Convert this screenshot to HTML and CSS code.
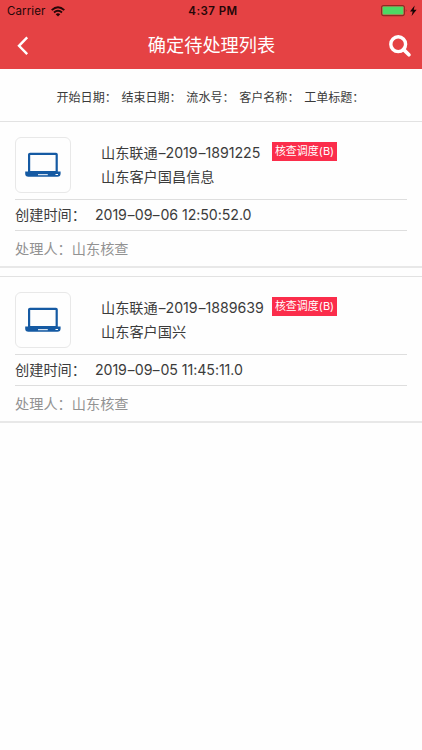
FILE: index.html
```html
<!DOCTYPE html>
<html lang="zh-CN">
<head>
<meta charset="utf-8">
<title>确定待处理列表</title>
<link rel="stylesheet" href="styles.css">
</head>
<body>
<header class="header">
  <div class="status">
    <div class="carrier"><span>Carrier</span>
      <svg width="14" height="11" viewBox="0 0 14 11" fill="none" stroke="#250708" stroke-width="1.9"><path d="M.7 4.1Q7-1.8 13.3 4.1M3 6.5q4-3.5 8 0"/><path d="M7 10.6 4.7 8.2q2.3-1.8 4.6 0z" fill="#250708" stroke="none"/></svg>
    </div>
    <div class="clock">4:37 PM</div>
    <svg class="battery" width="36" height="12" viewBox="0 0 36 12"><rect x=".6" y=".6" width="22.8" height="10" rx="2" fill="none" stroke="#8d2a24" stroke-width="1.1"/><rect x="1.6" y="1.6" width="20.8" height="8" rx=".7" fill="#4cd964"/><path d="M24.8 4q1.4 1.6 0 3.2z" fill="#8d2a24"/><path d="M33.7.5 29 6.4h2.7L30.6 11l5-6.2h-2.9z" fill="#150405"/></svg>
  </div>
  <div class="nav">
    <svg width="12" height="20" viewBox="0 0 12 20" fill="none" stroke="#fff" stroke-width="2.4"><path d="M10.2 1.4 2 9.8l8.2 8.4"/></svg>
    <h1>确定待处理列表</h1>
    <svg width="22" height="22" viewBox="0 0 22 22" fill="none" stroke="#fff"><circle cx="9.2" cy="9.2" r="7.4" stroke-width="3.4"/><path d="m14.4 14.4 5.5 5.4" stroke-width="3.6" stroke-linecap="round"/></svg>
  </div>
</header>
<nav class="filters"><span>开始日期：</span><span>结束日期：</span><span>流水号：</span><span>客户名称：</span><span>工单标题：</span></nav>
<main class="list">
  <article class="card">
    <div class="top">
      <div class="thumb"><svg width="36" height="26" viewBox="0 0 36 26"><path fill="#155aa3" fill-rule="evenodd" d="M5 .8h26q1.8 0 1.8 1.8V21H3V2.6Q3 .8 5 .8zM5.2 2.9V19h25.4V2.9z"/><path fill="#155aa3" d="M.2 19.4h35.4v2.2q0 3.2-3.2 3.2h-29Q.2 24.800.2 21.600z"/><path stroke="#fff" d="M13 22.700h9.800M30.500 22.500h2.500"/></svg></div>
      <div class="info"><div class="code">山东联通<i>-</i>2019<i>-</i>1891225</div><div>山东客户国昌信息</div></div>
      <span class="badge">核查调度(B)</span>
    </div>
    <div class="time"><span>创建时间：</span><span class="date">2019<i>-</i>09<i>-</i>06 12:50:52.0</span></div>
    <div class="person">处理人：山东核查</div>
  </article>
  <article class="card">
    <div class="top">
      <div class="thumb"><svg width="36" height="26" viewBox="0 0 36 26"><path fill="#155aa3" fill-rule="evenodd" d="M5 .8h26q1.8 0 1.8 1.8V21H3V2.6Q3 .8 5 .8zM5.2 2.9V19h25.4V2.9z"/><path fill="#155aa3" d="M.2 19.4h35.4v2.2q0 3.2-3.2 3.2h-29Q.2 24.800.2 21.600z"/><path stroke="#fff" d="M13 22.700h9.800M30.500 22.500h2.500"/></svg></div>
      <div class="info"><div class="code">山东联通<i>-</i>2019<i>-</i>1889639</div><div>山东客户国兴</div></div>
      <span class="badge">核查调度(B)</span>
    </div>
    <div class="time"><span>创建时间：</span><span class="date">2019<i>-</i>09<i>-</i>05 11:45:11.0</span></div>
    <div class="person">处理人：山东核查</div>
  </article>
</main>
</body>
</html>
```
FILE: styles.css
```css
* { box-sizing: border-box; }
body {
  margin: 0;
  background: #fefefe;
  color: #3b3b3b;
  font: 14.2px/24px Inter, "Noto Sans CJK SC", sans-serif;
  white-space: nowrap;
}
svg { display: block; flex: none; }
i { display: inline-block; width: 8px; text-align: center; font-style: normal; transform: scaleX(1.5); }

.header { height: 69px; background: #e54244; color: #fff; }
.status {
  display: grid;
  grid-template-columns: 1fr auto 1fr;
  height: 22px;
  padding: 0 5px 0 7px;
  align-items: center;
  color: #250708;
  font-size: 11.5px;
  line-height: 22px;
}
.carrier { display: flex; align-items: center; gap: 6px; letter-spacing: .1px; }
.clock { padding-left: 2px; font-weight: 600; letter-spacing: .45px; }
.battery { justify-self: end; }
.nav { display: flex; height: 47px; padding: 0 11px 0 17px; align-items: center; justify-content: space-between; }
.nav h1 { margin: -2px 0 0 5px; font-size: 18.2px; font-weight: 400; line-height: 24px; }

.filters { display: flex; height: 52px; padding: 5px 0 0 56.5px; gap: 4.7px; align-items: center; font-size: 12.05px; }

.list { display: grid; gap: 8px; }
.card { height: 147px; padding: 0 15px; border-top: 1px solid #e2e2e2; border-bottom: 2px solid #e8e8e8; }
.top { display: flex; height: 78px; padding-top: 15px; align-items: flex-start; border-bottom: 1px solid #dedede; }
.thumb { display: grid; width: 56px; height: 56px; place-items: center; border: 1px solid #e8e8e8; border-radius: 6px; }
.info { width: 171px; margin-top: 4px; padding-left: 30px; }
.code { letter-spacing: -.05px; }
.badge { width: 65px; height: 19px; margin: 5px 0 0 30px; background: #fb2d4b; color: #fff; font-size: 11px; line-height: 19px; text-align: center; }
.info + .badge { margin-left: 30px; }
.time { display: flex; height: 31px; gap: 9px; align-items: center; border-bottom: 1px solid #dedede; }
.date { letter-spacing: -.07px; }
.person { padding-top: 6px; color: #929292; }
```
